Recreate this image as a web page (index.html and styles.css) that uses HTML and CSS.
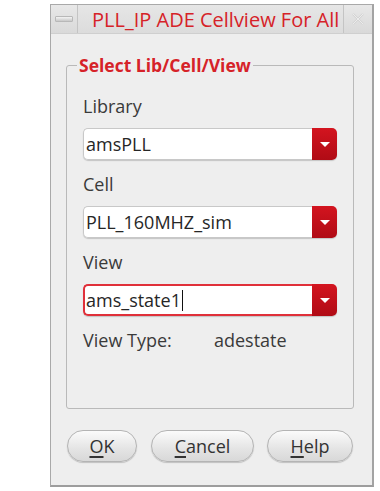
FILE: index.html
```html
<!DOCTYPE html>
<html>
<head>
<meta charset="utf-8">
<link rel="stylesheet" href="styles.css">
</head>
<body>
<div class="window">
  <div class="titlebar">
    <div class="tb-btn min"><span class="dash"></span></div>
    <div class="title">PLL_IP ADE Cellview For All</div>
    <div class="tb-btn close">
      <svg width="18" height="18" viewBox="0 0 18 18"><path d="M4 4 L14 14 M14 4 L4 14" stroke="#d4d4d4" stroke-width="2.4" fill="none"/><path d="M4 4 L14 14 M14 4 L4 14" stroke="#ececec" stroke-width="1" fill="none"/></svg>
    </div>
  </div>
  <div class="content">
    <fieldset class="group">
      <legend>Select Lib/Cell/View</legend>
      <div class="label">Library</div>
      <div class="combo"><div class="field">amsPLL</div><div class="drop"><span class="tri"></span></div></div>
      <div class="label">Cell</div>
      <div class="combo"><div class="field">PLL_160MHZ_sim</div><div class="drop"><span class="tri"></span></div></div>
      <div class="label">View</div>
      <div class="combo active"><div class="field">ams_state1<span class="caret"></span></div><div class="drop"><span class="tri"></span></div></div>
      <div class="vtype"><span class="vt-label">View Type:</span><span class="vt-value">adestate</span></div>
    </fieldset>
    <div class="buttons">
      <div class="btn ok"><u>O</u>K</div>
      <div class="btn cancel"><u>C</u>ancel</div>
      <div class="btn help"><u>H</u>elp</div>
    </div>
  </div>
</div>
</body>
</html>
```

FILE: styles.css
```css
html, body {
  margin: 0;
  padding: 0;
  background: #ffffff;
}
body {
  font-family: "Open Sans", "DejaVu Sans", sans-serif;
  color: #333333;
}
.window {
  margin: 4px 0 0 50px;
  width: 321px;
  height: 480px;
  border: 1px solid #a9a9a9;
  border-bottom: 2px solid #9d9d9d;
  border-right: 2px solid #a3a3a3;
  background: #eeeeee;
  display: flex;
  flex-direction: column;
}
.titlebar {
  height: 28px;
  display: flex;
  background: #e3e3e3;
  border-bottom: 1px solid #cfcfcf;
}
.tb-btn {
  width: 26px;
  display: flex;
  align-items: center;
  justify-content: center;
  background: linear-gradient(#e8e8e8, #d9d9d9);
}
.min {
  border-right: 1px solid #c4c4c4;
}
.dash {
  width: 16px;
  height: 4px;
  background: linear-gradient(#f4f4f4, #c8c8c8);
  border: 1px solid #b8b8b8;
  border-radius: 1px;
}
.close {
  width: 28px;
  border-left: 1px solid #c4c4c4;
}
.title {
  flex: 1;
  overflow: hidden;
  white-space: nowrap;
  color: #d62228;
  font-size: 20px;
  line-height: 30px;
  padding-left: 14px;
  background: linear-gradient(#e6e6e6, #dcdcdc);
}
.content {
  flex: 1;
  display: flex;
  flex-direction: column;
  padding: 0 18px 0 15px;
}
.group {
  margin: 23px 0 0 0;
  padding: 23px 16px 0 16px;
  height: 352px;
  box-sizing: border-box;
  border: 1px solid #b9b9b9;
  border-radius: 3px;
}
.group legend {
  color: #d62228;
  font-weight: bold;
  font-size: 17.5px;
  padding: 0 2px;
  margin-left: -6px;
  line-height: 16px;
}
.label {
  font-size: 18px;
  line-height: 20px;
  height: 20px;
  color: #3a3a3a;
  margin-bottom: 12px;
}
.combo {
  display: flex;
  height: 32px;
  margin-bottom: 14px;
  border-radius: 5px;
  box-shadow: 0 1px 1px #c4c4c4;
}
.combo .field {
  flex: 1;
  background: #ffffff;
  border: 1px solid #c8c8c8;
  border-right: none;
  border-radius: 5px 0 0 5px;
  font-size: 18px;
  line-height: 30px;
  padding-left: 2px;
  color: #262626;
}
.combo.active .field {
  border: 2px solid #e0303a;
  border-right: none;
  line-height: 28px;
  padding-left: 1px;
}
.caret {
  display: inline-block;
  width: 1px;
  height: 21px;
  background: #111;
  vertical-align: -4px;
  margin-left: 1px;
}
.drop {
  width: 25px;
  background: linear-gradient(#d3141f, #b00b15);
  border-radius: 0 5px 5px 0;
  display: flex;
  align-items: center;
  justify-content: center;
}
.tri {
  width: 0;
  height: 0;
  border-left: 5px solid transparent;
  border-right: 5px solid transparent;
  border-top: 5px solid #ffffff;
}
.vtype {
  font-size: 18px;
  line-height: 20px;
  color: #3a3a3a;
  display: flex;
  margin-top: 1px;
}
.vt-label {
  width: 131px;
}
.buttons {
  display: flex;
  gap: 14px;
  margin-top: 21px;
  padding-left: 1px;
}
.btn {
  height: 30px;
  border: 1px solid #b4b4b4;
  border-radius: 16px;
  background: linear-gradient(#fbfbfb, #e4e4e4 60%, #d8d8d8);
  box-shadow: 0 1px 1px #c0c0c0;
  font-size: 18px;
  line-height: 30px;
  text-align: center;
  color: #333;
}
.btn u {
  text-decoration-thickness: 2px;
  text-underline-offset: 3px;
}
.ok { width: 68px; }
.cancel { width: 101px; }
.help { width: 84px; margin-left: -1px; }
```
